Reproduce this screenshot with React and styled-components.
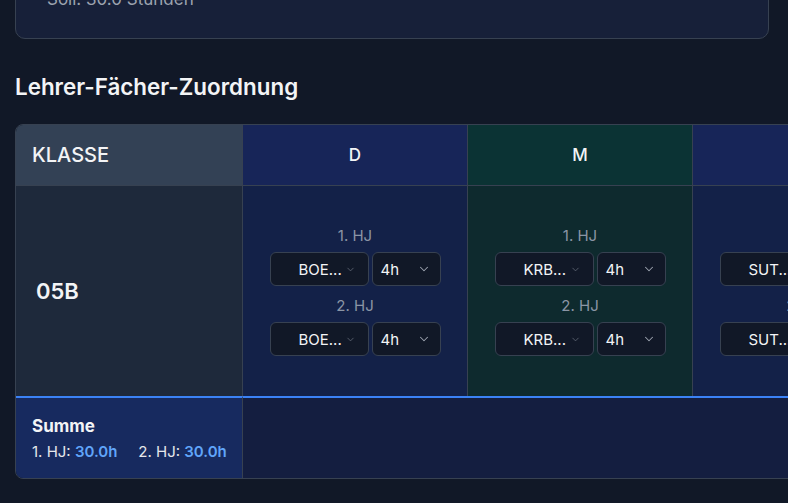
import React from "react";
import styled, { createGlobalStyle } from "styled-components";
import { ChevronDown } from "lucide-react";

const subjects = [
  { name: "D", teacher: "BOE...", tone: "blue" },
  { name: "M", teacher: "KRB...", tone: "green" },
  { name: "E", teacher: "SUT...", tone: "blue" },
];

const tones = {
  blue: { head: "#172558", body: "#132148" },
  green: { head: "#0b3334", body: "#0e2a2e" },
};

function Select({ value, wide }) {
  return (
    <SelectBox $wide={wide}>
      <SelectText>{value}</SelectText>
      <ChevronDown size={wide ? 11 : 14} strokeWidth={wide ? 1.6 : 1.8} />
    </SelectBox>
  );
}

function App() {
  return (
    <Page>
      <GlobalStyle />
      <Card>
        <CardTitle>Stundenübersicht</CardTitle>
        <CardNote>Soll: 30.0 Stunden</CardNote>
      </Card>

      <Heading>Lehrer-Fächer-Zuordnung</Heading>

      <Table>
        <HeadCell $first>KLASSE</HeadCell>
        {subjects.map((s) => (
          <HeadCell key={s.name} $tone={s.tone}>
            {s.name === "E" ? "" : s.name}
          </HeadCell>
        ))}

        <ClassCell>05B</ClassCell>
        {subjects.map((s) => (
          <BodyCell key={s.name} $tone={s.tone}>
            <Group>
              <HalfLabel>1. HJ</HalfLabel>
              <SelectRow>
                <Select value={s.teacher} wide />
                <Select value="4h" />
              </SelectRow>
            </Group>
            <Group>
              <HalfLabel>2. HJ</HalfLabel>
              <SelectRow>
                <Select value={s.teacher} wide />
                <Select value="4h" />
              </SelectRow>
            </Group>
          </BodyCell>
        ))}

        <SumCell>
          <SumTitle>Summe</SumTitle>
          <SumLine>
            <span>
              1. HJ: <Hours>30.0h</Hours>
            </span>
            <span>
              2. HJ: <Hours>30.0h</Hours>
            </span>
          </SumLine>
        </SumCell>
        <FootRest />
      </Table>
    </Page>
  );
}

export default App;

const GlobalStyle = createGlobalStyle`
  html, body {
    margin: 0;
    background: #111827;
    overflow: hidden;
  }
  body {
    font-family: Inter, "Noto Sans", sans-serif;
    color: #f3f4f6;
  }
`;

const Page = styled.div`
  padding: 0 19px 0 15px;
  margin-top: -46px;
`;

const Card = styled.div`
  background: #172039;
  border: 1px solid #374151;
  border-radius: 10px;
  padding: 14px 31px 29px;
`;

const CardTitle = styled.div`
  font-size: 17px;
  line-height: 20px;
  color: #d1d5db;
`;

const CardNote = styled.div`
  font-size: 17px;
  line-height: 20px;
  color: #9ca3af;
`;

const Heading = styled.h2`
  margin: 34px 0 23px;
  font-size: 22.4px;
  line-height: 28px;
  font-weight: 600;
  color: #f3f4f6;
`;

const Table = styled.div`
  display: grid;
  grid-template-columns: 227px 225px 225px 225px;
  width: max-content;
  border: 1px solid #374151;
  border-radius: 8px;
  overflow: hidden;
`;

const HeadCell = styled.div`
  height: 60px;
  display: flex;
  align-items: center;
  justify-content: ${(p) => (p.$first ? "flex-start" : "center")};
  padding-left: ${(p) => (p.$first ? "16px" : "0")};
  background: ${(p) => (p.$first ? "#334155" : tones[p.$tone].head)};
  border-right: 1px solid #374151;
  border-bottom: 1px solid #374151;
  font-size: ${(p) => (p.$first ? "20px" : "17px")};
  font-weight: 500;
  color: #f3f4f6;
`;

const ClassCell = styled.div`
  height: 210px;
  display: flex;
  align-items: center;
  padding-left: 20px;
  background: #1e293b;
  border-right: 1px solid #374151;
  font-size: 22px;
  font-weight: 600;
`;

const BodyCell = styled.div`
  height: 210px;
  display: flex;
  flex-direction: column;
  align-items: center;
  justify-content: center;
  gap: 10px;
  background: ${(p) => tones[p.$tone].body};
  border-right: 1px solid #374151;
`;

const Group = styled.div`
  display: flex;
  flex-direction: column;
  align-items: center;
`;

const HalfLabel = styled.div`
  font-size: 15px;
  line-height: 20px;
  color: #8b95a5;
  margin-bottom: 6px;
`;

const SelectRow = styled.div`
  display: flex;
  gap: 3px;
`;

const SelectBox = styled.div`
  box-sizing: border-box;
  width: ${(p) => (p.$wide ? "99px" : "69px")};
  height: 34px;
  display: flex;
  align-items: center;
  padding: ${(p) => (p.$wide ? "0 12px 0 28px" : "0 9px 0 8px")};
  background: #111827;
  border: 1px solid #374151;
  border-radius: 6px;
  color: ${(p) => (p.$wide ? "#6b7280" : "#9ca3af")};
`;

const SelectText = styled.span`
  flex: 1;
  font-size: 15px;
  color: #f3f4f6;
`;

const SumCell = styled.div`
  height: 82px;
  box-sizing: border-box;
  padding: 16px 0 0 16px;
  background: #172a5f;
  border-top: 2px solid #3b82f6;
  border-right: 1px solid #374151;
`;

const SumTitle = styled.div`
  font-size: 17px;
  line-height: 24px;
  font-weight: 700;
  color: #f3f4f6;
`;

const SumLine = styled.div`
  display: flex;
  gap: 21px;
  margin-top: 4px;
  font-size: 15px;
  line-height: 20px;
  color: #e5e7eb;
`;

const Hours = styled.b`
  font-weight: 600;
  color: #60a5fa;
`;

const FootRest = styled.div`
  grid-column: span 3;
  background: #141e40;
  border-top: 2px solid #3b82f6;
`;
